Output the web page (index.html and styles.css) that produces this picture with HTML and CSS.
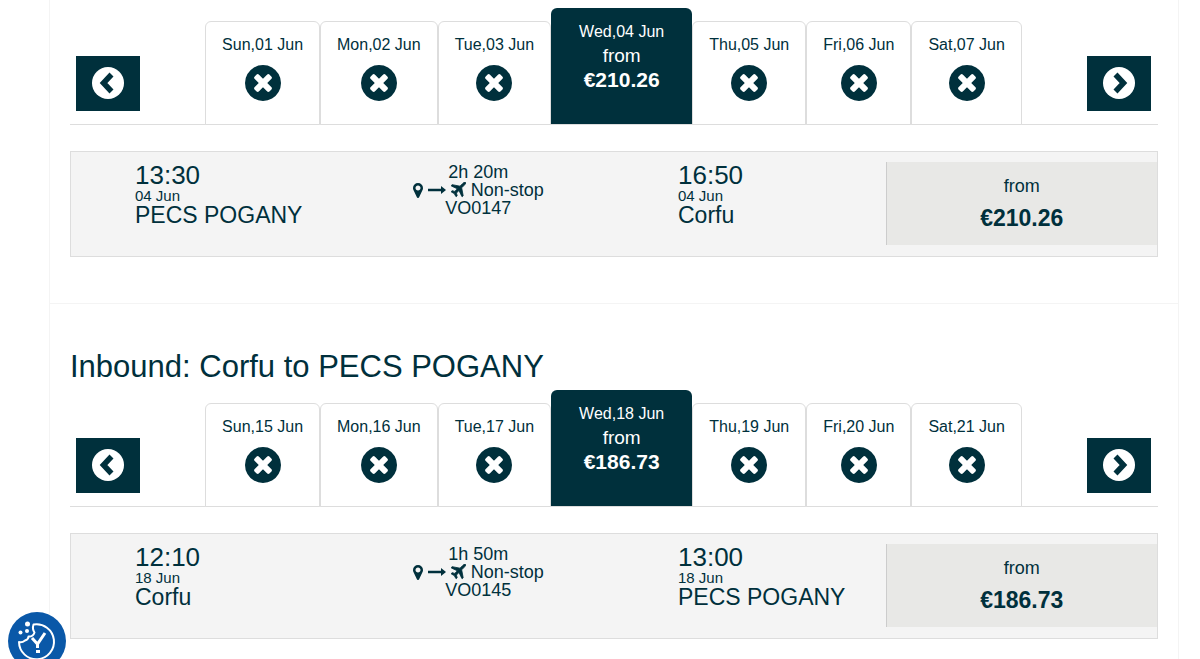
FILE: index.html
```
<!DOCTYPE html>
<html lang="en">
<head>
    <meta charset="UTF-8">
    <meta name="viewport" content="width=device-width, initial-scale=1.0">
    <title>Select flights</title>
    <link rel="stylesheet" href="styles.css">
</head>
<body>
    <svg class="sprite" aria-hidden="true">
        <symbol id="icon-unavailable" viewBox="0 0 1536 1536">
            <path transform="translate(0 1408) scale(1 -1)" d="M1149 414q0 26 -19 45l-181 181l181 181q19 19 19 45q0 27 -19 46l-90 90q-19 19 -46 19q-26 0 -45 -19l-181 -181l-181 181q-19 19 -45 19q-27 0 -46 -19l-90 -90q-19 -19 -19 -46q0 -26 19 -45l181 -181l-181 -181q-19 -19 -19 -45q0 -27 19 -46l90 -90q19 -19 46 -19q26 0 45 19l181 181l181 -181q19 -19 45 -19q27 0 46 19l90 90q19 19 19 46zM1536 640q0 -209 -103 -385.5t-279.5 -279.5t-385.5 -103t-385.5 103t-279.5 279.5t-103 385.5t103 385.5t279.5 279.5t385.5 103t385.5 -103t279.5 -279.5t103 -385.5z"/>
        </symbol>
        <symbol id="icon-prev" viewBox="0 0 32 32">
            <circle cx="16" cy="16" r="16" fill="#fff"/>
            <path d="M19.5 7.5L11.5 16L19.5 24.5" fill="none" stroke="#00303c" stroke-width="5.5"/>
        </symbol>
        <symbol id="icon-next" viewBox="0 0 32 32">
            <circle cx="16" cy="16" r="16" fill="#fff"/>
            <path d="M12.5 7.5L20.5 16L12.5 24.5" fill="none" stroke="#00303c" stroke-width="5.5"/>
        </symbol>
        <symbol id="icon-pin" viewBox="0 0 1024 1536">
            <path transform="translate(0 1408) scale(1 -1)" d="M768 896q0 106 -75 181t-181 75t-181 -75t-75 -181t75 -181t181 -75t181 75t75 181zM1024 896q0 -109 -33 -179l-364 -774q-16 -33 -47.5 -52t-67.5 -19t-67.5 19t-46.5 52l-365 774q-33 70 -33 179q0 212 150 362t362 150t362 -150t150 -362z"/>
        </symbol>
        <symbol id="icon-arrow" viewBox="0 0 18 10">
            <path d="M0 3.8H13V1L18 5L13 9V6.2H0Z"/>
        </symbol>
        <symbol id="icon-plane" viewBox="0 0 1408 1536">
            <path transform="translate(0 1408) scale(1 -1)" stroke="currentColor" stroke-width="80" d="M1397 1324q0 -87 -149 -236l-240 -240l143 -746l1 -6q0 -14 -9 -23l-64 -64q-9 -9 -23 -9q-21 0 -29 18l-274 575l-245 -245q68 -238 68 -252t-9 -23l-64 -64q-9 -9 -23 -9q-18 0 -28 16l-155 280l-280 155q-17 9 -17 28q0 14 9 23l64 65q9 9 23 9t252 -68l245 245l-575 274q-18 8 -18 29q0 14 9 23l64 64q9 9 23 9q4 0 6 -1l746 -143l240 240q149 149 236 149q32 0 52.5 -20.5t20.5 -52.5z"/>
        </symbol>
    </svg>

    <main>
        <section class="journey">
            <nav class="days" aria-label="Outbound dates">
                <button class="arrow" aria-label="Earlier dates"><svg><use href="#icon-prev"/></svg></button>
                <div class="tabs">
                    <button class="tab">Sun,01 Jun<svg><use href="#icon-unavailable"/></svg></button>
                    <button class="tab">Mon,02 Jun<svg><use href="#icon-unavailable"/></svg></button>
                    <button class="tab">Tue,03 Jun<svg><use href="#icon-unavailable"/></svg></button>
                    <button class="tab active">Wed,04 Jun<span class="tab-from">from</span><strong>€210.26</strong></button>
                    <button class="tab">Thu,05 Jun<svg><use href="#icon-unavailable"/></svg></button>
                    <button class="tab">Fri,06 Jun<svg><use href="#icon-unavailable"/></svg></button>
                    <button class="tab">Sat,07 Jun<svg><use href="#icon-unavailable"/></svg></button>
                </div>
                <button class="arrow" aria-label="Later dates"><svg><use href="#icon-next"/></svg></button>
            </nav>
            <div class="flight">
                <div class="stop">
                    <div class="time">13:30</div>
                    <div class="date">04 Jun</div>
                    <div class="city">PECS POGANY</div>
                </div>
                <div class="route">
                    <div>2h 20m</div>
                    <div class="route-line">
                        <svg class="pin"><use href="#icon-pin"/></svg>
                        <svg class="line"><use href="#icon-arrow"/></svg>
                        <svg class="plane"><use href="#icon-plane"/></svg>
                        <span>Non-stop</span>
                    </div>
                    <div>VO0147</div>
                </div>
                <div class="stop">
                    <div class="time">16:50</div>
                    <div class="date">04 Jun</div>
                    <div class="city">Corfu</div>
                </div>
                <button class="price">from<strong>€210.26</strong></button>
            </div>
        </section>

        <section class="journey">
            <h2>Inbound: Corfu to PECS POGANY</h2>
            <nav class="days" aria-label="Inbound dates">
                <button class="arrow" aria-label="Earlier dates"><svg><use href="#icon-prev"/></svg></button>
                <div class="tabs">
                    <button class="tab">Sun,15 Jun<svg><use href="#icon-unavailable"/></svg></button>
                    <button class="tab">Mon,16 Jun<svg><use href="#icon-unavailable"/></svg></button>
                    <button class="tab">Tue,17 Jun<svg><use href="#icon-unavailable"/></svg></button>
                    <button class="tab active">Wed,18 Jun<span class="tab-from">from</span><strong>€186.73</strong></button>
                    <button class="tab">Thu,19 Jun<svg><use href="#icon-unavailable"/></svg></button>
                    <button class="tab">Fri,20 Jun<svg><use href="#icon-unavailable"/></svg></button>
                    <button class="tab">Sat,21 Jun<svg><use href="#icon-unavailable"/></svg></button>
                </div>
                <button class="arrow" aria-label="Later dates"><svg><use href="#icon-next"/></svg></button>
            </nav>
            <div class="flight">
                <div class="stop">
                    <div class="time">12:10</div>
                    <div class="date">18 Jun</div>
                    <div class="city">Corfu</div>
                </div>
                <div class="route">
                    <div>1h 50m</div>
                    <div class="route-line">
                        <svg class="pin"><use href="#icon-pin"/></svg>
                        <svg class="line"><use href="#icon-arrow"/></svg>
                        <svg class="plane"><use href="#icon-plane"/></svg>
                        <span>Non-stop</span>
                    </div>
                    <div>VO0145</div>
                </div>
                <div class="stop">
                    <div class="time">13:00</div>
                    <div class="date">18 Jun</div>
                    <div class="city">PECS POGANY</div>
                </div>
                <button class="price">from<strong>€186.73</strong></button>
            </div>
        </section>
    </main>

    <button class="cookie" aria-label="Cookie settings">
        <svg viewBox="0 0 58 58">
            <path d="M25.5 12.5A17.5 17.5 0 1 1 11 30Q14 31 17 28.500Q20.500 27.500 20.500 24.500Q25 25 26.500 20.500Q24 17 25.500 12.500Z" fill="none" stroke="#fff" stroke-width="2" stroke-linejoin="round"/>
            <circle cx="19.500" cy="12" r="2.500" fill="#fff"/>
            <circle cx="12.500" cy="20.500" r="2" fill="#fff"/>
            <circle cx="19" cy="19" r="2" fill="#fff"/>
            <path d="M24 26L29.500 32L37 21M29.500 31V36" fill="none" stroke="#fff" stroke-width="3"/>
            <rect x="28" y="38" width="4" height="3" fill="#fff"/>
        </svg>
    </button>
</body>
</html>
```

FILE: styles.css
```
* {
    box-sizing: border-box;
}
html {
    overflow: hidden;
}
body {
    margin: 0;
    background: #fff;
    color: #00303c;
    font-family: Arial, "Liberation Sans", sans-serif;
    font-size: 16px;
}
button {
    margin: 0;
    border: none;
    color: inherit;
    font-family: inherit;
    cursor: pointer;
}
svg {
    display: block;
    fill: currentColor;
}
.sprite {
    position: absolute;
    width: 0;
    height: 0;
}
main {
    margin: 0 21px 0 49px;
}
.journey {
    padding: 8px 20px 46px;
    border: 1px solid #f4f4f4;
    border-top: none;
}
h2 {
    margin: 0;
    padding: 34px 0 2px;
    font-size: 31px;
    font-weight: normal;
    line-height: 42px;
}

/* Date tabs */
.days {
    display: flex;
    justify-content: space-between;
    align-items: flex-end;
    padding: 0 7px 0 6px;
    border-bottom: 1px solid #ddd;
}
.arrow {
    display: flex;
    justify-content: center;
    padding: 11px 16px 12px;
    margin-bottom: 13px;
    background: #00303c;
}
.arrow svg {
    width: 32px;
    height: 32px;
}
.tabs {
    display: flex;
    align-items: flex-end;
    margin-bottom: -1px;
}
.tab {
    display: flex;
    flex-direction: column;
    align-items: center;
    height: 104px;
    padding: 11px 16px 0;
    background: #fff;
    border: 1px solid #ddd;
    border-radius: 6px 6px 0 0;
    font-size: 16px;
    line-height: 24px;
}
.tab svg {
    width: 36px;
    height: 36px;
    margin-top: 8px;
}
.tab.active {
    height: 117px;
    padding: 12px 28px 0;
    background: #00303c;
    border: none;
    border-bottom: 1px solid #ddd;
    color: #fff;
}
.tab-from {
    font-size: 19px;
}
.tab strong {
    font-size: 21px;
}

/* Flight row */
.flight {
    display: grid;
    grid-template-columns: repeat(4, 1fr);
    margin-top: 26px;
    padding: 10px 0 11px;
    background: #f4f4f4;
    border: 1px solid #ddd;
}
.stop {
    padding-left: 64px;
}
.time {
    font-size: 26px;
    line-height: 26px;
}
.date {
    font-size: 15px;
    line-height: 16px;
}
.city {
    font-size: 23px;
    line-height: 22px;
}
.route {
    padding-top: 1px;
    font-size: 18px;
    line-height: 18px;
    text-align: center;
}
.route-line {
    display: flex;
    justify-content: center;
    align-items: center;
    gap: 5px;
}
.pin {
    width: 10px;
    height: 15px;
}
.line {
    width: 18px;
    height: 10px;
}
.plane {
    width: 15px;
    height: 16px;
}
.price {
    display: flex;
    flex-direction: column;
    align-items: center;
    justify-content: center;
    gap: 2px;
    height: 83px;
    padding: 0 0 4px;
    background: #e8e8e6;
    border-left: 1px solid #ccc;
    font-size: 18px;
    line-height: 30px;
}
.price strong {
    font-size: 23px;
}

/* Cookie settings, floating over the page */
.cookie {
    position: fixed;
    left: 8px;
    bottom: -11px;
    width: 58px;
    height: 58px;
    padding: 0;
    background: #0a58a8;
    border-radius: 50%;
}
```
